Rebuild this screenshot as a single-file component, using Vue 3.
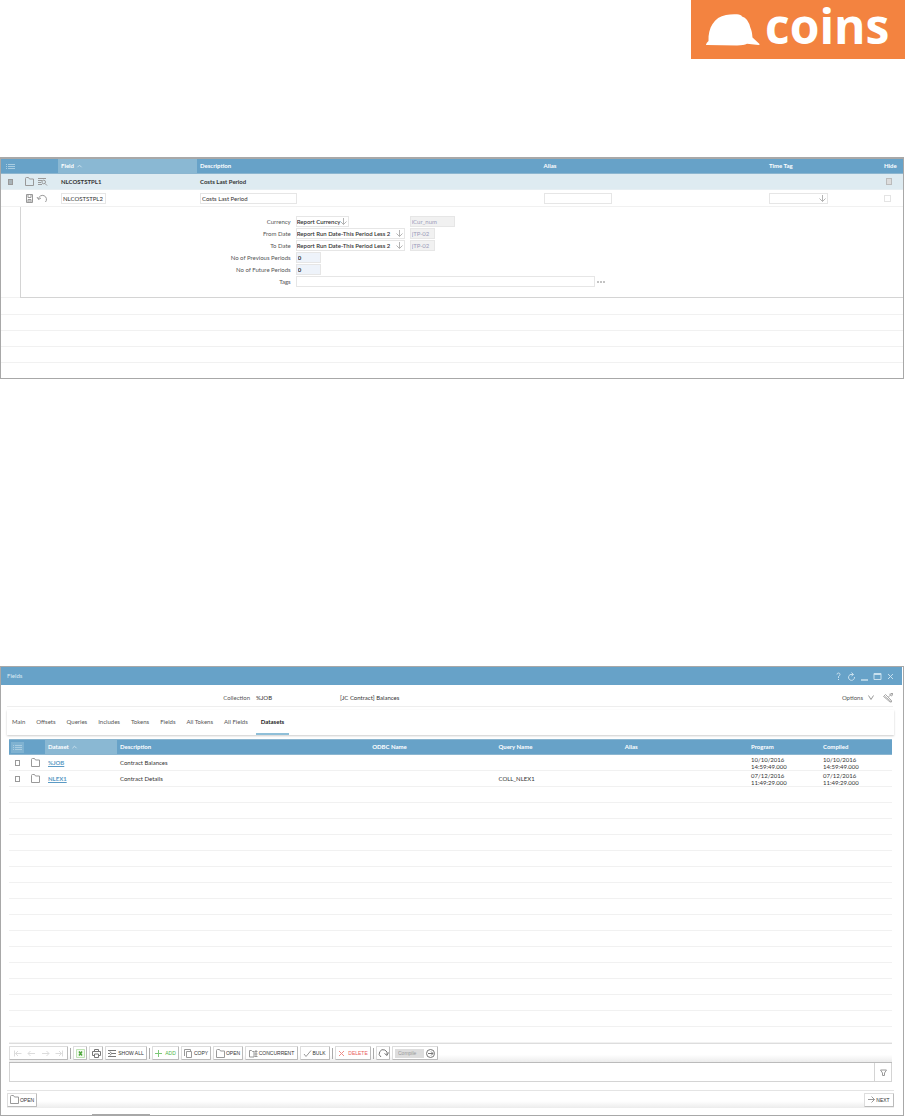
<script setup>
import { ref } from 'vue'

const selected = ref(true)
const currency = ref('Report Currency')
const fromDate = ref('Report Run Date-This Period Less 2')
const toDate = ref('Report Run Date-This Period Less 2')
const activeTab = ref('Datasets')
const tabs = ['Main', 'Offsets', 'Queries', 'Includes', 'Tokens', 'Fields', 'All Tokens', 'All Fields', 'Datasets']
const datasets = [
  { name: '%JOB', description: 'Contract Balances', query: '', date: '10/10/2016', time: '14:59:49.000' },
  { name: 'NLEX1', description: 'Contract Details', query: 'COLL_NLEX1', date: '07/12/2016', time: '11:49:29.000' }
]
const folderPath = 'M.5 8.5V1.5Q.5.5 1.5.5H3.5L4.5 2H8.5V8.5Z'
</script>

<template>
  <div class="page">
    <header class="masthead">
      <div class="logo">
        <svg class="helmet" viewBox="0 0 54 32" aria-hidden="true">
          <path d="M0 30.500Q.5 28.500 2.500 27C2 14 8 3 20 1Q25 0 31 0.300Q35 .5 36 2.500Q42 4 44.500 14Q46 17 46.500 23.500L53.500 30Q54 31 52.500 31L41 29.800Q38 31.500 31 31.500L1 31Q0 31 0 30.500Z" fill="#fff" />
        </svg>
        <span class="wordmark">coins</span>
      </div>
    </header>

    <section class="panel fields-panel">
      <table class="grid">
        <colgroup>
          <col class="f-check"><col class="f-tools"><col class="f-field"><col class="f-desc"><col class="f-alias"><col class="f-time"><col class="f-hide">
        </colgroup>
        <thead>
          <tr>
            <th class="mid"><svg class="i9 list" viewBox="0 0 9 9"><path d="M0 2.5h1M2 2.5h7M0 4.5h1M2 4.5h7M0 6.5h1M2 6.5h7" /></svg></th>
            <th></th>
            <th class="sorted">Field <svg class="caret" viewBox="0 0 6 4"><path d="M.5 3.5 3 1 5.5 3.5" /></svg></th>
            <th>Description</th><th>Alias</th><th>Time Tag</th><th>Hide</th>
          </tr>
        </thead>
        <tbody>
          <tr class="picked">
            <td class="mid"><input v-model="selected" type="checkbox" class="tick" aria-label="Select NLCOSTSTPL1"></td>
            <td>
              <div class="tools">
                <svg class="i9" viewBox="0 0 9 9"><path :d="folderPath" /></svg>
                <svg class="i9" viewBox="0 0 9 9"><path d="M0 1.5h8M0 3.5h4M0 5.5h3M0 7.5h4M7 6.5l2 2" /><circle cx="5.7" cy="5" r="1.8" /></svg>
              </div>
            </td>
            <td class="strong">NLCOSTSTPL1</td><td class="strong">Costs Last Period</td><td></td><td></td>
            <td><input type="checkbox" class="hide-box off" disabled aria-label="Hide NLCOSTSTPL1"></td>
          </tr>
          <tr class="editing">
            <td></td>
            <td>
              <div class="tools">
                <svg class="i9" viewBox="0 0 9 9"><path d="M1.5.5h6v8h-6zM3 .5v3h3v-3M3 8.500v-3h3v3M3.500 7h2" /></svg>
                <svg class="i9" viewBox="0 0 9 9"><path d="M.5 5A4 4 0 1 1 7.500 8M-1 3l1.500 2.500 2.500-1.500" /></svg>
              </div>
            </td>
            <td><input class="box w-field" value="NLCOSTSTPL2" aria-label="Field"></td>
            <td><input class="box w-desc" value="Costs Last Period" aria-label="Description"></td>
            <td><input class="box w-alias" aria-label="Alias"></td>
            <td>
              <span class="pick w-time"><select aria-label="Time Tag"><option></option></select>
                <svg class="down" viewBox="0 0 7 7"><path d="M3.500 0v6.500M.5 3.500l3 3 3-3" /></svg></span>
            </td>
            <td><input type="checkbox" class="hide-box" aria-label="Hide NLCOSTSTPL2"></td>
          </tr>
          <tr class="detail">
            <td></td>
            <td colspan="6" class="detail-cell">
              <div class="form">
                <label for="currency">Currency</label>
                <div class="line">
                  <span class="pick w-cur"><select id="currency" v-model="currency"><option>Report Currency</option></select>
                    <svg class="down" viewBox="0 0 7 7"><path d="M3.500 0v6.500M.5 3.500l3 3 3-3" /></svg></span>
                  <input class="box off w-code cur" value="iCur_num" disabled aria-label="Currency code">
                </div>
                <label for="from">From Date</label>
                <div class="line">
                  <span class="pick w-date"><select id="from" v-model="fromDate"><option>Report Run Date-This Period Less 2</option></select>
                    <svg class="down" viewBox="0 0 7 7"><path d="M3.500 0v6.500M.5 3.500l3 3 3-3" /></svg></span>
                  <input class="box off w-num" value="jTP-02" disabled aria-label="From date code">
                </div>
                <label for="to">To Date</label>
                <div class="line">
                  <span class="pick w-date"><select id="to" v-model="toDate"><option>Report Run Date-This Period Less 2</option></select>
                    <svg class="down" viewBox="0 0 7 7"><path d="M3.500 0v6.500M.5 3.500l3 3 3-3" /></svg></span>
                  <input class="box off w-num" value="jTP-02" disabled aria-label="To date code">
                </div>
                <label for="prev">No of Previous Periods</label>
                <div class="line"><input id="prev" class="box num w-num" value="0"></div>
                <label for="next">No of Future Periods</label>
                <div class="line"><input id="next" class="box num w-num" value="0"></div>
                <label for="tags">Tags</label>
                <div class="line tags"><input id="tags" class="box w-tags"><button class="plain" aria-label="More tags"><svg class="dots" viewBox="0 0 8 2"><path d="M0 1h2M3 1h2M6 1h2" /></svg></button></div>
              </div>
            </td>
          </tr>
          <tr v-for="n in 5" :key="n" class="blank"><td colspan="7"></td></tr>
        </tbody>
      </table>
    </section>

    <section class="panel window">
      <div class="title-bar">
        <span>Fields</span>
        <div class="win-tools">
          <button class="plain" aria-label="Help"><svg class="i9" viewBox="0 0 9 9"><path d="M3 2.500Q3 1 4.500 1T6 2.500Q6 3.500 4.500 4.500V6M4.500 7V8" /></svg></button>
          <button class="plain" aria-label="Refresh"><svg class="i9" viewBox="0 0 9 9"><path d="M5.500 2.500A3 3 0 1 0 7.500 5M3.500 2.500H6.500M4.500.5l2 2-2 1.500" /></svg></button>
          <button class="plain" aria-label="Minimise"><svg class="i9" viewBox="0 0 9 9"><path d="M1 8h7" stroke-width="1.500" /></svg></button>
          <button class="plain" aria-label="Maximise"><svg class="i9" viewBox="0 0 9 9"><path d="M1 1.500h7v6H1zM1 2.500h7" /></svg></button>
          <button class="plain" aria-label="Close"><svg class="i9" viewBox="0 0 9 9"><path d="M2 2l5 5M7 2l-5 5" /></svg></button>
        </div>
      </div>
      <div class="summary">
        <span class="caption">Collection</span>
        <span class="code">%JOB</span>
        <span class="name">[JC Contract] Balances</span>
        <button class="plain options">Options <svg class="chev" viewBox="0 0 6 5"><path d="M.5.5 3 4.500 5.500.5" /></svg></button>
        <button class="plain" aria-label="Tools"><svg class="i10 thin" viewBox="0 0 10 10"><path d="M.5 3.500l2-2 6 6v1.500h-1.500zM1.500 3l6.500 5.500M5.500 4l2.500-2.500M6.500.8l1 1.500 1.500.7M9.500 0 8 1.500M7.500.5h2v2" /></svg></button>
      </div>
      <nav class="tabs">
        <button v-for="tab in tabs" :key="tab" :class="{ active: tab === activeTab }" @click="activeTab = tab">{{ tab }}</button>
      </nav>
      <div class="body">
        <table class="grid sets">
          <colgroup>
            <col class="s-check"><col class="s-icon"><col class="s-name"><col class="s-desc"><col class="s-mid"><col class="s-mid"><col class="s-mid"><col class="s-date"><col class="s-date">
          </colgroup>
          <thead>
            <tr>
              <th class="mid"><span class="list-wrap"><svg class="i9 list" viewBox="0 0 9 9"><path d="M0 2.500h1M2 2.500h7M0 4.500h1M2 4.500h7M0 6.500h1M2 6.500h7" /></svg></span></th>
              <th></th>
              <th class="sorted">Dataset <svg class="caret" viewBox="0 0 6 4"><path d="M.5 3.500 3 1 5.500 3.500" /></svg></th>
              <th>Description</th><th>ODBC Name</th><th>Query Name</th><th>Alias</th><th>Program</th><th>Compiled</th>
            </tr>
          </thead>
          <tbody>
            <tr v-for="row in datasets" :key="row.name">
              <td class="mid"><input type="checkbox" class="tick" :aria-label="'Select ' + row.name"></td>
              <td class="mid"><svg class="i9" viewBox="0 0 9 9"><path :d="folderPath" /></svg></td>
              <td><a href="#">{{ row.name }}</a></td>
              <td>{{ row.description }}</td><td></td><td>{{ row.query }}</td><td></td>
              <td class="stamp">{{ row.date }}<br>{{ row.time }}</td>
              <td class="stamp">{{ row.date }}<br>{{ row.time }}</td>
            </tr>
            <tr v-for="n in 16" :key="n"><td colspan="9"></td></tr>
          </tbody>
        </table>
        <div class="toolbar">
          <div class="btn nav-group">
            <button class="plain" aria-label="First"><svg class="i9" viewBox="0 0 9 9"><path d="M1.500 1.500v6M8.500 4.500h-6M5 2 2.500 4.500 5 7" /></svg></button>
            <button class="plain" aria-label="Previous"><svg class="i9" viewBox="0 0 9 9"><path d="M8 4.500H1M3.500 2 1 4.500 3.500 7" /></svg></button>
            <button class="plain" aria-label="Next"><svg class="i9" viewBox="0 0 9 9"><path d="M1 4.500h7M5.500 2 8 4.500 5.500 7" /></svg></button>
            <button class="plain" aria-label="Last"><svg class="i9" viewBox="0 0 9 9"><path d="M7.500 1.500v6M.5 4.500h6M4 2l2.500 2.500L4 7" /></svg></button>
          </div>
          <i class="sep"></i>
          <button class="btn square" aria-label="Excel"><svg class="i9" viewBox="0 0 9 9"><path d="M.5.5h8v8h-8z" stroke="#bfe3b5" fill="#f3faf0" /><path d="M3 2.500l3 4M6 2.500l-3 4" stroke="#4fa83d" stroke-width="1.500" /></svg></button>
          <button class="btn square" aria-label="Print"><svg class="i9 dark" viewBox="0 0 9 9"><path d="M2.500 2.500v-2h4v2M2 6.500H.5v-4h8v4H7M2.500 5h4v3.500h-4z" /></svg></button>
          <button class="btn w-show"><svg class="i9 dark" viewBox="0 0 9 9"><path d="M0 1.500h8M0 7.500h8M0 4.500h2M3.500 4.500h4.500M2 2.500l1.500 2M2 6.500l1.500-2" /></svg>SHOW ALL</button>
          <i class="sep"></i>
          <button class="btn add w-add"><svg class="i7" viewBox="0 0 7 7"><path d="M3.500 0v7M0 3.500h7" /></svg>ADD</button>
          <button class="btn w-mid"><svg class="i9" viewBox="0 0 9 9"><path d="M2.500 2.500h5v6h-5zM.5 7V.5h6v2" /></svg>COPY</button>
          <button class="btn w-mid"><svg class="i9" viewBox="0 0 9 9"><path :d="folderPath" /></svg>OPEN</button>
          <button class="btn w-conc"><svg class="i9" viewBox="0 0 9 9"><path d="M.5 8V1.500h2l1 1h1.500V8zM7 1v7M5.500 2.500h3M5.500 5h3M5.500 7.500h3" /></svg>CONCURRENT</button>
          <button class="btn w-mid"><svg class="i7" viewBox="0 0 7 7"><path d="M0 4l2 2.500L7 .5" /></svg>BULK</button>
          <i class="sep"></i>
          <button class="btn del w-del"><svg class="i7" viewBox="0 0 7 7"><path d="M1 1l5 5M6 1 1 6" /></svg>DELETE</button>
          <i class="sep"></i>
          <button class="btn square" aria-label="Redo"><svg class="i9 dark" viewBox="0 0 9 9"><path d="M2 8A4 4 0 1 1 8 6M5.500 4.500 8 6.500l1.500-3" /></svg></button>
          <div class="btn compile"><select disabled aria-label="Action"><option>Compile</option></select>
            <button class="plain" aria-label="Run"><svg class="i9 dark" viewBox="0 0 9 9"><circle cx="4.500" cy="4.500" r="4" /><path d="M2 4.500h5M5 2.500l2 2-2 2" /></svg></button></div>
        </div>
        <div class="filter">
          <input aria-label="Filter">
          <button class="plain" aria-label="Apply filter"><svg class="i7" viewBox="0 0 7 7"><path d="M.5 1h6L4.500 4v2.500h-2V4z" /></svg></button>
        </div>
      </div>
      <footer class="foot">
        <button class="btn w-mid"><svg class="i9" viewBox="0 0 9 9"><path :d="folderPath" /></svg>OPEN</button>
        <button class="btn w-mid"><svg class="i7" viewBox="0 0 7 7"><path d="M0 3.500h6.500M3.500.5l3 3-3 3" /></svg>NEXT</button>
      </footer>
      <div class="thumb"></div>
    </section>
  </div>
</template>

<style>
body { background: #fff; }
</style>

<style scoped>
* { box-sizing: border-box; }
.page { font: 6px/8px Lato, "Liberation Sans", sans-serif; color: #333; }
svg { display: block; flex: none; fill: none; stroke: #999; stroke-width: 1; overflow: visible; }
.i9 { width: 9px; height: 9px; }
.i10 { width: 10px; height: 10px; }
.i7 { width: 7px; height: 7px; }
.dark { stroke: #777; }
.thin { stroke: #888; stroke-width: 0.7; }
button, input, select { font: inherit; color: inherit; }
input[type="checkbox"] { appearance: none; margin: 0; display: block; }
.plain { border: 0; background: none; padding: 0; display: flex; align-items: center; }

.masthead { display: flex; justify-content: flex-end; height: 59px; margin: 0 1px 98px 0; }
.logo { width: 214px; background: #f38340; display: flex; align-items: center; padding: 0 15px; gap: 5px; }
.helmet { width: 54px; height: 32px; stroke: none; }
.wordmark { font: 700 48px/52px "Open Sans", sans-serif; color: #fff; padding-bottom: 7px; }

.panel { border: 1px solid #a8a8a8; margin-right: 2px; background: #fff; }
.fields-panel { margin-bottom: 287px; border-top-width: 2px; }
.grid { width: 100%; table-layout: fixed; border-collapse: separate; border-spacing: 0; }
th, td { padding: 0 0 0 3px; text-align: left; vertical-align: middle; height: 16px; border-bottom: 1px solid #f1f1f1; font-weight: 400; white-space: nowrap; }
th { background: #67a2c8; color: #fff; font-weight: 700; height: 15px; border-bottom-color: #8cb6d0; }
th.sorted { background: #8ab8d3; }
.mid > * { margin: 0 auto; }
.mid > input.tick { margin: 0 auto; }
td.mid, th.mid { padding: 0; }
.list { stroke: #a9cde2; }
.caret { display: inline-block; width: 5px; height: 4px; stroke: #d3e6f0; margin-left: 2px; }
.f-check { width: 19px; } .f-tools { width: 38px; } .f-field { width: 139px; }
.f-alias { width: 25%; } .f-time { width: 115px; } .f-hide { width: 22px; }
.picked td { background: #deebf1; border-bottom-color: #e6eef2; }
.strong { font-weight: 700; }
.tools { display: flex; gap: 4px; padding-left: 2px; }
.tick { width: 5px; height: 6px; border: 1px solid #999; }
.tick:checked { background: #a9b4b9; }
.hide-box { width: 7px; height: 7px; border: 1px solid #e4e4e4; margin-left: 3px; }
.hide-box.off { width: 6px; border-color: #bbb; background: #dcdcdc; margin-left: 2px; }
.editing td { height: 17px; }
.box { height: 11px; border: 1px solid #e6e6e6; background: #fff; padding: 0 1px; margin: 0; display: block; min-width: 0; }
.w-field { width: 45px; } .w-desc { width: 97px; } .w-alias { width: 68px; } .w-time { width: 59px; }
.pick { position: relative; display: block; height: 11px; }
.pick select { appearance: none; width: 100%; height: 11px; border: 1px solid #e6e6e6; border-radius: 0; background: #fff; padding: 0; font-weight: 600; display: block; }
.down { position: absolute; right: 2px; top: 2px; width: 7px; height: 7px; stroke: #b4b4b4; }
.detail > .detail-cell { border-left: 1px solid #d4d4d4; border-bottom-color: #d4d4d4; padding: 9px 0 10px 1px; }
.form { display: grid; grid-template-columns: 30.5% 1fr; column-gap: 5px; row-gap: 1px; grid-auto-rows: 11px; align-items: center; }
.form label { text-align: right; color: #555; }
.line { display: flex; align-items: center; gap: 5px; }
.line .box { line-height: 9px; }
.w-cur { width: 53px; } .w-date { width: 109px; } .w-num { width: 25px; } .w-code { width: 45px; } .w-tags { width: 299px; }
.cur { margin-left: 56px; }
.box.off { background: #f1f1f1; color: #9c9cba; }
.box.num { background: #eef3fa; font-weight: 700; }
.line.tags { gap: 2px; }
.dots { width: 8px; height: 2px; stroke: #888; }
.blank:nth-child(4) td { height: 17px; }
.blank:last-child td { border-bottom: 0; height: 15px; }

.window { position: relative; padding-right: 1px; }
.title-bar { background: #67a2c8; color: #dcebf4; height: 18px; display: flex; align-items: center; justify-content: space-between; padding: 0 7px 0 6px; }
.win-tools { display: flex; gap: 4px; }
.win-tools svg { stroke: #c8e0ee; }
.summary { display: flex; align-items: center; height: 22px; margin: 0 9px 3px 6px; border-bottom: 1px solid #eee; padding-top: 4px; }
.caption { width: 243px; text-align: right; color: #555; margin-right: 6px; }
.code { width: 84px; }
.options { margin-left: auto; margin-right: 9px; gap: 5px; color: #555; }
.chev { width: 6px; height: 5px; }
.tabs { display: flex; gap: 1px; height: 25px; margin: 0 8px 4px 6px; padding: 0; box-shadow: 0 1px 2px #ccc; }
.tabs button { border: 0; border-bottom: 2px solid transparent; background: none; padding: 0 5px; color: #555; }
.tabs button.active { border-color: #8fbfd8; color: #222; font-weight: 700; margin-left: 2px; }
.body { margin: 0 10px 0 8px; }
.sets { border-bottom: 1px solid #ddd; }
.sets th { height: 16px; border-top: 1px solid #8cb6d0; }
.s-check { width: 17px; } .s-icon { width: 19px; } .s-name { width: 72px; } .s-mid { width: 14.300%; } .s-date { width: 72px; }
.list-wrap { display: block; width: 13px; padding: 1px 2px; background: #7fb2d1; }
.sets a { color: #5b9ac4; font-weight: 700; text-decoration: underline; }
.stamp { line-height: 7px; }
.toolbar { display: flex; align-items: center; gap: 2px; height: 19px; border-bottom: 1px solid #bbb; background: linear-gradient(#fff 60%, #ececec); }
.btn { height: 14px; border: 1px solid #ddd; border-right-color: #bbb; border-bottom-color: #bbb; border-radius: 1px; background: #fff; padding: 0 1px; display: flex; align-items: center; justify-content: center; gap: 1px; font: 5px/8px "Liberation Sans", sans-serif; color: #333; white-space: nowrap; }
.nav-group { width: 59px; justify-content: space-around; }
.nav-group svg { stroke: #dcdcdc; }
.sep { width: 1px; height: 11px; background: #aaa; }
.square { width: 14px; } .w-show { width: 42px; } .w-add { width: 27px; } .w-mid { width: 30px; } .w-conc { width: 53px; } .w-del { width: 36px; }
.add { color: #4fb548; gap: 3px; } .add svg { stroke: #7cc877; }
.del { color: #e8605a; gap: 3px; } .del svg { stroke: #ee8d88; }
.compile { width: 46px; justify-content: space-between; padding: 0 2px; }
.compile select { appearance: none; width: 29px; height: 9px; border: 0; border-radius: 0; background: #ddd; padding: 0 3px; color: #999; opacity: 1; }
.filter { display: flex; height: 19px; border: 1px solid #d4d4d4; border-top: 0; }
.filter input { flex: 1; border: 0; background: none; min-width: 0; padding: 0 3px; }
.filter .plain { width: 17px; border-left: 1px solid #d4d4d4; justify-content: center; }
.foot { display: flex; justify-content: space-between; align-items: center; height: 18px; margin: 8px 8px 7px 6px; border-top: 1px solid #e4e4e4; background: linear-gradient(#fff 60%, #ececec); }
.thumb { position: absolute; left: 91px; bottom: 0; width: 58px; height: 1px; background: #a8a8a8; }
</style>
